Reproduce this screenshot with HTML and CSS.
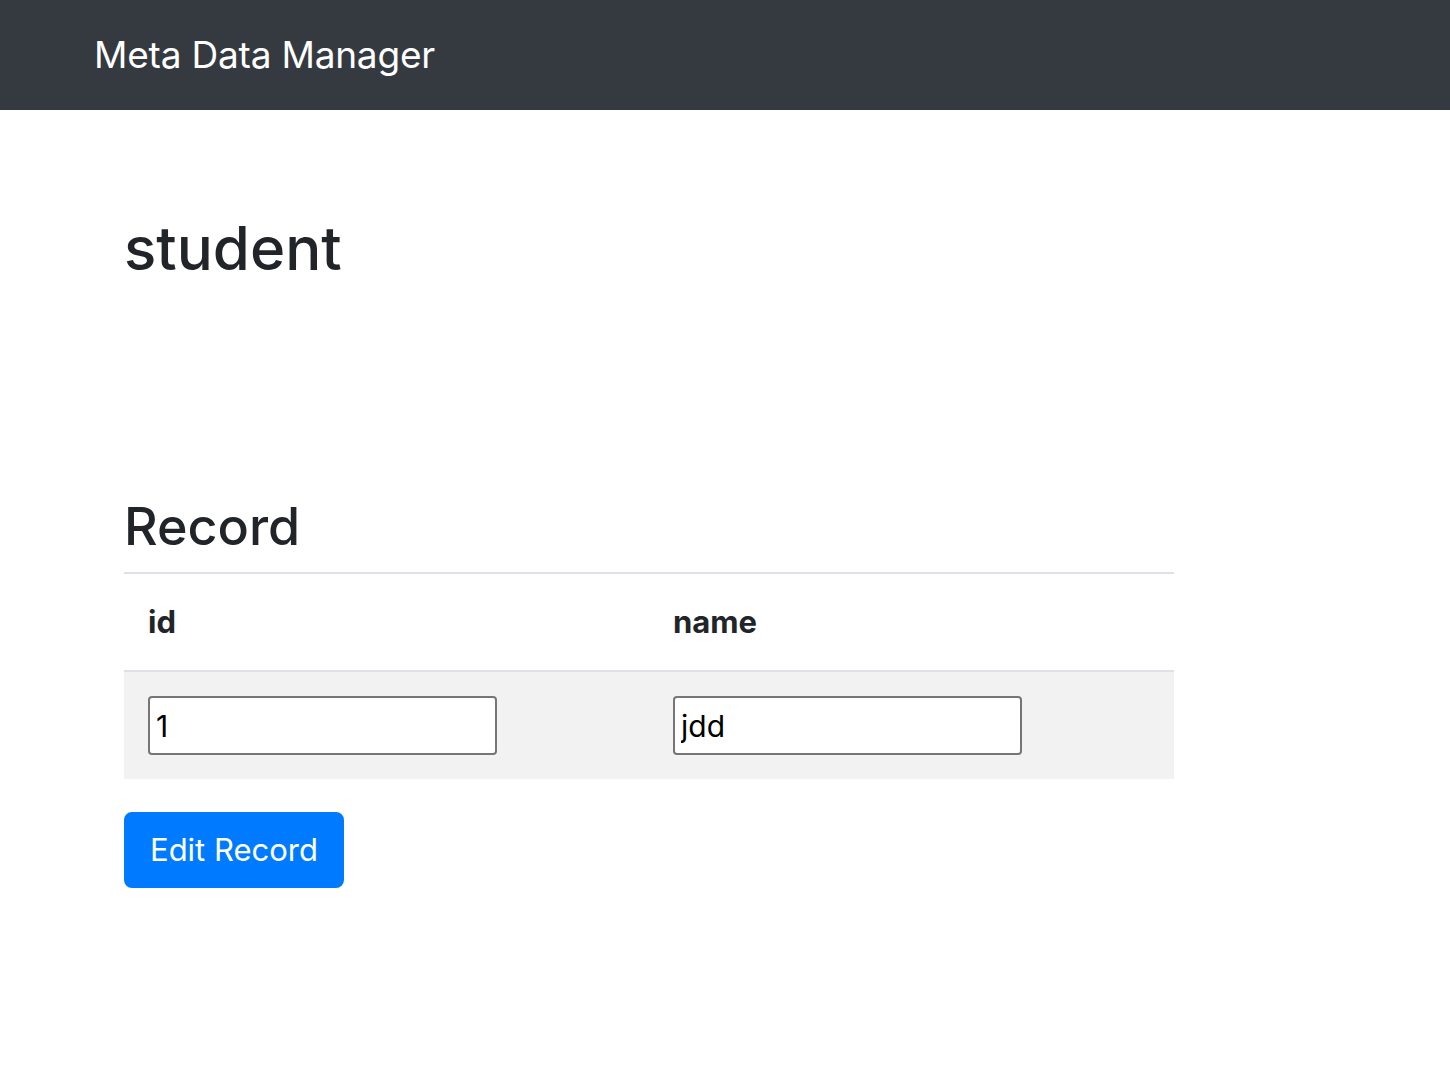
FILE: index.html
```html
<!DOCTYPE html>
<html lang="en">
<head>
<meta charset="utf-8">
<title>Meta Data Manager</title>
<link rel="stylesheet" href="styles.css">
</head>
<body>
<nav class="navbar">
  <a class="brand" href="#">Meta Data Manager</a>
</nav>
<main class="content">
  <h2 class="table-title">student</h2>
  <h3 class="section-title">Record</h3>
  <form class="record-form">
    <table class="record-table">
      <thead>
        <tr>
          <th>id</th>
          <th>name</th>
        </tr>
      </thead>
      <tbody>
        <tr>
          <td><input class="field" type="text" value="1"></td>
          <td><input class="field" type="text" value="jdd"></td>
        </tr>
      </tbody>
    </table>
    <button class="btn-primary" type="button">Edit Record</button>
  </form>
</main>
</body>
</html>
```

FILE: styles.css
```css
* { box-sizing: border-box; }

body {
  margin: 0;
  background: #fff;
  color: #212529;
  font-family: Inter, "Noto Sans", "Liberation Sans", sans-serif;
}

.navbar {
  height: 110px;
  background: #343a40;
  display: flex;
  align-items: center;
  padding-left: 94px;
}

.brand {
  color: #fff;
  text-decoration: none;
  font-size: 37px;
  line-height: 50px;
  font-weight: 400;
  letter-spacing: -0.2px;
}

.content {
  width: 1050px;
  margin-left: 124px;
}

.table-title {
  margin: 101px 0 0;
  font-size: 60px;
  line-height: 74px;
  font-weight: 500;
}

.section-title {
  margin: 209px 0 13px;
  font-size: 52px;
  line-height: 65px;
  font-weight: 500;
}

.record-form {
  display: flex;
  flex-direction: column;
  align-items: flex-start;
  gap: 33px;
}

.record-table {
  width: 100%;
  border-collapse: collapse;
  border-top: 2px solid #dee2e6;
}

.record-table th {
  width: 50%;
  text-align: left;
  padding: 23px 24px;
  font-size: 31px;
  line-height: 50px;
  font-weight: 700;
  border-bottom: 2px solid #dee2e6;
}

.record-table td {
  padding: 24px;
  background: #f2f2f2;
}

.field {
  display: block;
  width: 349px;
  height: 59px;
  border: 2px solid #767676;
  border-radius: 4px;
  background: #fff;
  padding: 0 6px;
  font-family: Inter, "Liberation Sans", sans-serif;
  font-size: 30px;
  color: #000;
}

.btn-primary {
  height: 76px;
  width: 220px;
  border: 2px solid #007bff;
  border-radius: 8px;
  background: #007bff;
  color: #fff;
  font-family: Inter, "Noto Sans", sans-serif;
  font-size: 31px;
  padding: 0;
  line-height: 72px;
}
```
